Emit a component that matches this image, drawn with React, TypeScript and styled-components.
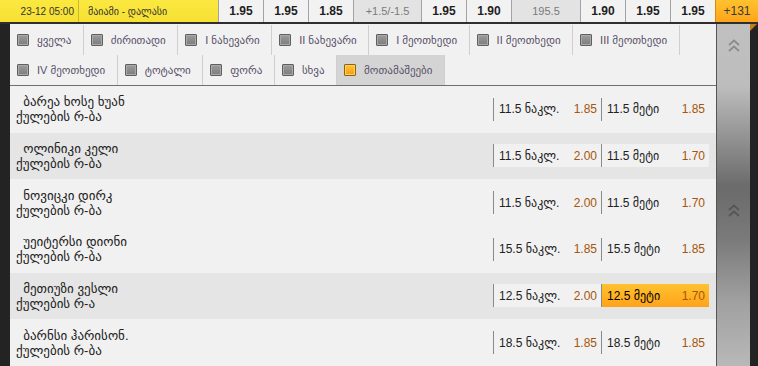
import React from "react";
import styled, { createGlobalStyle, css } from "styled-components";

const Global = createGlobalStyle`
  html, body { margin: 0; padding: 0; background: #232323; }
  body { font-family: "Liberation Sans", "DejaVu Sans", Arial, sans-serif; overflow: hidden; }
`;

const Page = styled.div`
  width: 758px;
  height: 366px;
  overflow: hidden;
  display: flex;
  flex-direction: column;
`;

const Header = styled.div`
  display: flex;
  height: 22px;
  border-bottom: 2px solid #2e2e2e;
  flex-shrink: 0;
`;

const MatchCell = styled.div`
  width: 218px;
  display: flex;
  background: linear-gradient(#fbe840, #f6e032);
  font-size: 10px;
  color: #333;
`;

const Time = styled.div`
  width: 79px;
  border-right: 1px solid #cdb92a;
  display: flex;
  align-items: center;
  justify-content: flex-end;
  padding-right: 4px;
  box-sizing: border-box;
  font-size: 10px;
  white-space: nowrap;
`;

const MatchName = styled.div`
  display: flex;
  align-items: center;
  padding-left: 9px;
`;

type OddKind = "odd" | "line" | "more";

const OddCell = styled.div<{ $w: number; $kind: OddKind }>`
  width: ${(p) => p.$w}px;
  box-sizing: border-box;
  border-left: 1px solid #a3a3a3;
  display: flex;
  align-items: center;
  justify-content: center;
  font-size: 12px;
  ${(p) =>
    p.$kind === "odd" &&
    css`
      background: #f2f2f2;
      color: #1e1e1e;
      font-weight: bold;
    `}
  ${(p) =>
    p.$kind === "line" &&
    css`
      background: #e3e3e3;
      color: #7a7a7a;
      font-size: 11px;
    `}
  ${(p) =>
    p.$kind === "more" &&
    css`
      background: linear-gradient(#ffc22f, #ffa41a);
      color: #3a3a3a;
      border-left-color: #d88a10;
    `}
`;

const Body = styled.div`
  flex: 1;
  display: flex;
  min-height: 0;
`;

const LeftStrip = styled.div`
  width: 10px;
  background: #232323;
  flex-shrink: 0;
`;

const Main = styled.div`
  flex: 1;
  background: #f1f1f1;
  display: flex;
  flex-direction: column;
  min-width: 0;
`;

const Tabs = styled.div`
  display: flex;
  flex-wrap: wrap;
  padding-top: 1px;
  border-bottom: 1px solid #6f6f6f;
`;

const Tab = styled.div<{ $active?: boolean }>`
  height: 30px;
  display: flex;
  align-items: center;
  gap: 8px;
  padding: 0 11.5px 0 7px;
  border-right: 1px solid #cfcfcf;
  font-size: 11px;
  color: #575068;
  background: ${(p) => (p.$active ? "#d4d4d4" : "transparent")};
  white-space: nowrap;
`;

const Check = styled.span<{ $on?: boolean }>`
  width: 12px;
  height: 12px;
  box-sizing: border-box;
  border: 1px solid ${(p) => (p.$on ? "#8a6412" : "#5f5f5f")};
  border-radius: 1px;
  background: ${(p) =>
    p.$on ? "linear-gradient(#ffc43a, #f59d12)" : "linear-gradient(#9c9c9c, #7c7c7c)"};
  box-shadow: inset 0 0 0 1px ${(p) => (p.$on ? "#ffcf5a" : "#a9a9a9")};
  flex-shrink: 0;
`;

const Row = styled.div<{ $dark?: boolean }>`
  height: 46.667px;
  flex-shrink: 0;
  display: flex;
  align-items: center;
  background: ${(p) => (p.$dark ? "#e5e5e5" : "#f1f1f1")};
`;

const Player = styled.div`
  flex: 1;
  padding-left: 6px;
  font-size: 13px;
  line-height: 15px;
  color: #222;
`;

const PlayerName = styled.div`
  white-space: pre;
`;

const Cells = styled.div`
  display: flex;
  margin-right: 7px;
`;

const Cell = styled.div<{ $bg?: boolean; $sel?: boolean }>`
  width: 108px;
  height: 23px;
  box-sizing: border-box;
  border-left: 1px solid #8a8a8a;
  display: flex;
  align-items: center;
  justify-content: space-between;
  padding: 0 4px 0 5px;
  font-size: 12px;
  color: ${(p) => (p.$sel ? "#000" : "#222")};
  background: ${(p) =>
    p.$sel ? "linear-gradient(#ffc22e, #ffa31a)" : p.$bg ? "#f1f1f1" : "transparent"};
`;

const Odd = styled.span`
  color: #a6550c;
`;

const Scroll = styled.div`
  width: 33px;
  flex-shrink: 0;
  border-left: 1px solid #555;
  background: linear-gradient(
    #c0c0c0 0px,
    #bdbdbd 62px,
    #6b6b6b 162px,
    #6e6e6e 175px,
    #7b7b7b 217px,
    #a0a0a0 277px,
    #b9b9b9 343px
  );
  display: flex;
  flex-direction: column;
  align-items: center;
  padding-top: 15px;
  gap: 152px;
  overflow: hidden;
`;

const Chevron = styled.svg<{ $c: string }>`
  flex-shrink: 0;
  color: ${(p) => p.$c};
`;

const RightStrip = styled.div`
  width: 8px;
  background: #232323;
  flex-shrink: 0;
`;

const Corner = styled.div`
  width: 0;
  height: 0;
  border-top: 7px solid #c77a16;
  border-right: 7px solid transparent;
`;

const DoubleUp = ({ c }: { c: string }) => (
  <Chevron $c={c} width="12" height="13" viewBox="0 0 12 13">
    <polyline points="1,6 6,1.5 11,6" fill="none" stroke="currentColor" strokeWidth="1.8" />
    <polyline points="1,12 6,7.5 11,12" fill="none" stroke="currentColor" strokeWidth="1.8" />
  </Chevron>
);

const headerCells: { t: string; w: number; k: OddKind }[] = [
  { t: "1.95", w: 45, k: "odd" },
  { t: "1.95", w: 45, k: "odd" },
  { t: "1.85", w: 45, k: "odd" },
  { t: "+1.5/-1.5", w: 68, k: "line" },
  { t: "1.95", w: 45, k: "odd" },
  { t: "1.90", w: 45, k: "odd" },
  { t: "195.5", w: 69, k: "line" },
  { t: "1.90", w: 45, k: "odd" },
  { t: "1.95", w: 45, k: "odd" },
  { t: "1.95", w: 45, k: "odd" },
  { t: "+131", w: 43, k: "more" },
];

const tabs = [
  "ყველა",
  "ძირითადი",
  "I ნახევარი",
  "II ნახევარი",
  "I მეოთხედი",
  "II მეოთხედი",
  "III მეოთხედი",
  "IV მეოთხედი",
  "ტოტალი",
  "ფორა",
  "სხვა",
  "მოთამაშეები",
];

const rows = [
  { n: "  ბარეა ხოსე ხუან", s: "ქულების რ-ბა", u: "11.5", uo: "1.85", o: "11.5", oo: "1.85", dark: false, sel: false },
  { n: "  ოლინიკი კელი", s: "ქულების რ-ბა", u: "11.5", uo: "2.00", o: "11.5", oo: "1.70", dark: true, sel: false },
  { n: "  ნოვიცკი დირკ", s: "ქულების რ-ბა", u: "11.5", uo: "2.00", o: "11.5", oo: "1.70", dark: false, sel: false },
  { n: "  უეიტერსი დიონი", s: "ქულების რ-ბა", u: "15.5", uo: "1.85", o: "15.5", oo: "1.85", dark: false, sel: false },
  { n: "  მეთიუზი ვესლი", s: "ქულების რ-ა", u: "12.5", uo: "2.00", o: "12.5", oo: "1.70", dark: true, sel: true },
  { n: "  ბარნსი ჰარისონ.", s: "ქულების რ-ბა", u: "18.5", uo: "1.85", o: "18.5", oo: "1.85", dark: false, sel: false },
];

export default function App() {
  return (
    <Page>
      <Global />
      <Header>
        <MatchCell>
          <Time>23-12 05:00</Time>
          <MatchName>მაიამი - დალასი</MatchName>
        </MatchCell>
        {headerCells.map((h, i) => (
          <OddCell key={i} $w={h.w} $kind={h.k}>
            {h.t}
          </OddCell>
        ))}
      </Header>
      <Body>
        <LeftStrip />
        <Main>
          <Tabs>
            {tabs.map((t, i) => (
              <Tab key={i} $active={i === tabs.length - 1}>
                <Check $on={i === tabs.length - 1} />
                {t}
              </Tab>
            ))}
          </Tabs>
          {rows.map((r, i) => (
            <Row key={i} $dark={r.dark}>
              <Player>
                <PlayerName>{r.n}</PlayerName>
                <div>{r.s}</div>
              </Player>
              <Cells>
                <Cell $bg={r.dark}>
                  <span>{r.u} ნაკლ.</span>
                  <Odd>{r.uo}</Odd>
                </Cell>
                <Cell $bg={r.dark} $sel={r.sel}>
                  <span>{r.o} მეტი</span>
                  <Odd>{r.oo}</Odd>
                </Cell>
              </Cells>
            </Row>
          ))}
        </Main>
        <Scroll>
          <DoubleUp c="#8c8c8c" />
          <DoubleUp c="#565656" />
          <DoubleUp c="#8c8c8c" />
        </Scroll>
        <RightStrip>
          <Corner />
        </RightStrip>
      </Body>
    </Page>
  );
}
